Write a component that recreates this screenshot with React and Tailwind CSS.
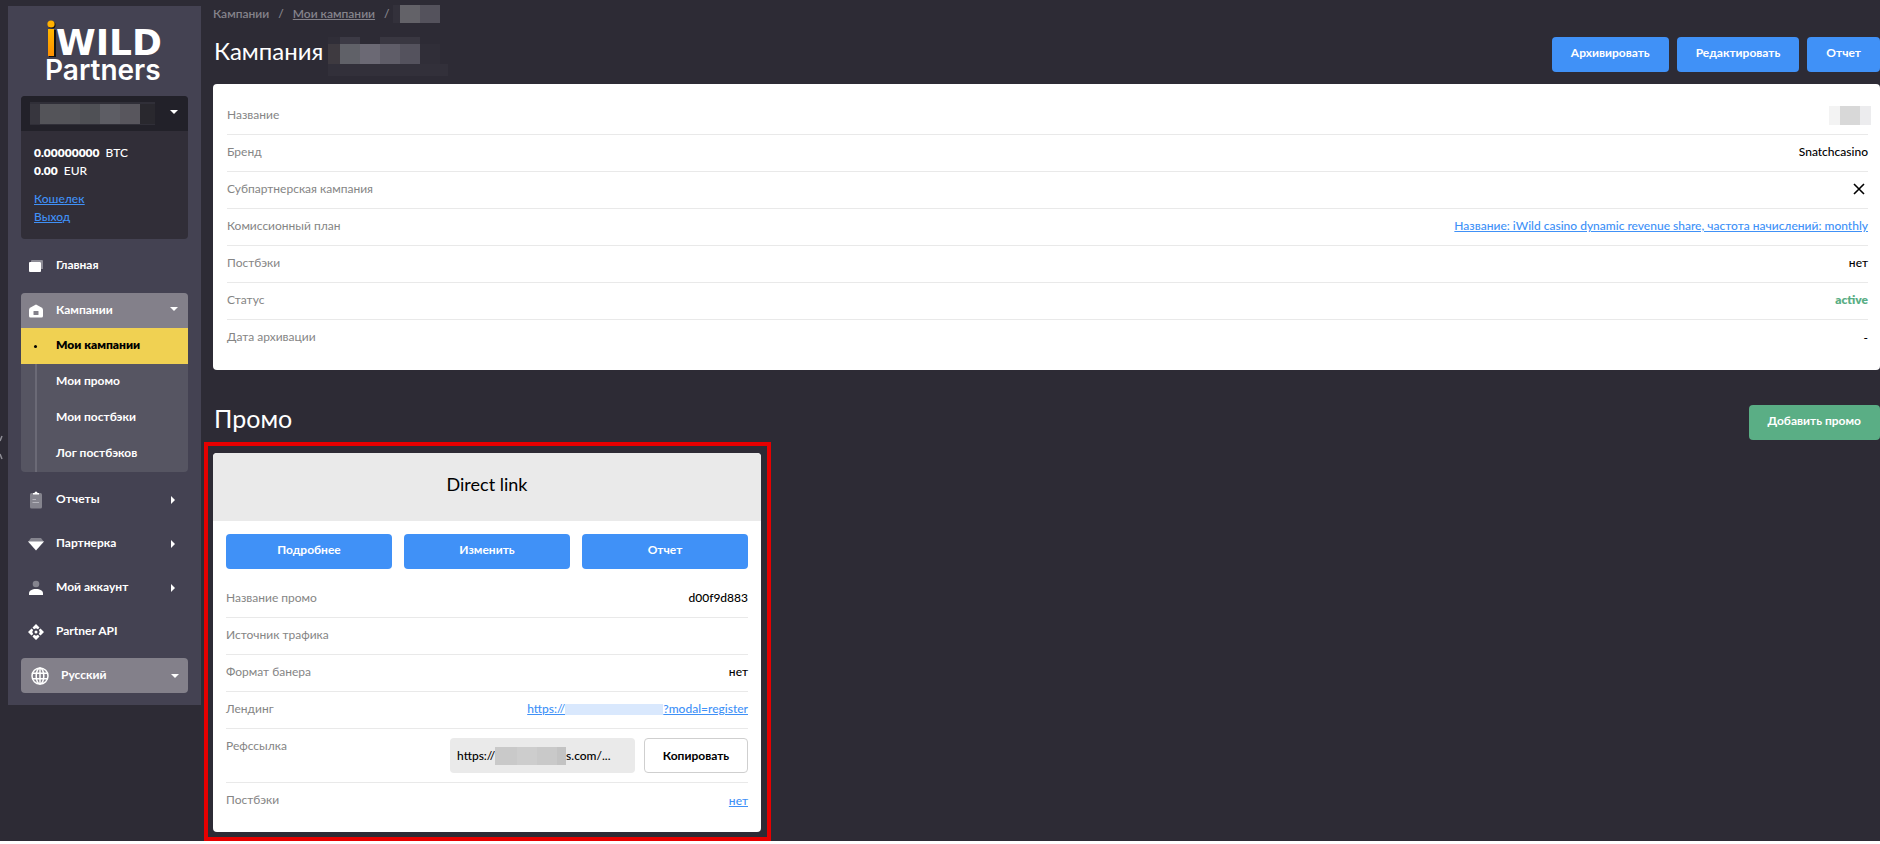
import React from "react";

const BLUE_BUTTON =
  "flex h-[35px] items-center justify-center rounded bg-[#4091f7] px-[19px] pb-1 text-xs font-bold text-white";

function CaretDown({ className = "" }) {
  return (
    <svg width="8" height="4" viewBox="0 0 8 4" className={className} aria-hidden="true">
      <path d="M0 0h8L4 4z" fill="#fff" />
    </svg>
  );
}

function CaretRight() {
  return (
    <svg width="4" height="8" viewBox="0 0 4 8" className="mr-px" aria-hidden="true">
      <path d="M0 0l4 4-4 4z" fill="#fff" />
    </svg>
  );
}

function HomeIcon() {
  return (
    <svg width="16" height="16" viewBox="0 0 16 16" aria-hidden="true">
      <path d="M4 2h10a1 1 0 0 1 1 1v8h-2V4H3V3a1 1 0 0 1 1-1z" fill="#8d8c96" />
      <rect x="1" y="4" width="12" height="10" rx="1" fill="#fff" />
    </svg>
  );
}

function CampaignIcon() {
  return (
    <svg width="16" height="16" viewBox="0 0 16 16" aria-hidden="true">
      <path d="M8 1.500 13.500 4.500Q15 5.400 15 7V13a1.500 1.500 0 0 1-1.500 1.500h-11A1.500 1.500 0 0 1 1 13V7Q1 5.400 2.500 4.500z" fill="#fff" />
      <rect x="5.500" y="8" width="5" height="4" rx="0.500" fill="#83808a" />
    </svg>
  );
}

function ReportIcon() {
  return (
    <svg width="16" height="18" viewBox="0 0 16 18" aria-hidden="true">
      <rect x="2" y="2" width="12" height="15.500" rx="1.500" fill="#85848e" />
      <path d="M5 3.500V2h1.500a1.500 1.500 0 0 1 3 0H11v1.500z" fill="#fff" />
      <path d="M4.500 8.500h3.500M4.500 11.500h6.500" stroke="#b4b3bb" strokeWidth="1" />
    </svg>
  );
}

function DiamondIcon() {
  return (
    <svg width="16" height="14" viewBox="0 0 16 14" aria-hidden="true">
      <path d="M3 1h10l3 4H0z" fill="#85848e" />
      <path d="M0 4.500h16L8 13.500z" fill="#fff" />
    </svg>
  );
}

function AccountIcon() {
  return (
    <svg width="16" height="16" viewBox="0 0 16 16" aria-hidden="true">
      <circle cx="8" cy="4" r="3.300" fill="#85848e" />
      <path d="M1 15v-1.500C1 10.500 4 9 8 9s7 1.500 7 4.500V15z" fill="#fff" />
    </svg>
  );
}

function ApiIcon() {
  return (
    <svg width="16" height="16" viewBox="0 0 16 16" aria-hidden="true">
      <g fill="#fff">
        <path d="M8 0l3.500 3.500-1.500 1.700L8 4.200 6 5.200 4.500 3.500z" />
        <path d="M8 16l3.500-3.500-1.500-1.700L8 11.800l-2-1-1.500 1.700z" />
        <path d="M0 8l3.500-3.500L5.200 6 4.200 8l1 2-1.700 1.500z" />
        <path d="M16 8l-3.500-3.500L10.800 6l1 2-1 2 1.700 1.500z" />
        <circle cx="8" cy="8" r="1.500" />
      </g>
    </svg>
  );
}

function GlobeIcon() {
  return (
    <svg width="18" height="18" viewBox="0 0 18 18" fill="none" stroke="#fff" strokeWidth="1.500" aria-hidden="true">
      <circle cx="9" cy="9" r="8" />
      <ellipse cx="9" cy="9" rx="3.800" ry="8" />
      <path d="M1.500 6.200h15M1.500 11.800h15M9 1v16" />
    </svg>
  );
}

function CrossIcon() {
  return (
    <svg width="12" height="12" viewBox="0 0 12 12" className="mr-[3px]" role="img" aria-label="нет">
      <path d="M1 1l10 10M11 1L1 11" stroke="#000" strokeWidth="1.600" />
    </svg>
  );
}

function Logo() {
  return (
    <svg width="120" height="70" viewBox="0 0 120 70" className="mx-auto" role="img" aria-label="iWILD Partners">
      <defs>
        <linearGradient id="flame" x1="0" y1="0" x2="0" y2="1">
          <stop offset="0" stopColor="#ffb800" />
          <stop offset="1" stopColor="#ff8f00" />
        </linearGradient>
      </defs>
      <text x="11" y="37" fill="#fff" className="font-['DejaVu_Sans',sans-serif] text-[36px] font-bold">
        WILD
      </text>
      <circle cx="7" cy="7" r="3.600" fill="#111" />
      <rect x="4" y="12" width="7" height="27" fill="#111" />
      <circle cx="6" cy="6" r="3.600" fill="#ffb000" />
      <rect x="3" y="11" width="6" height="27" fill="url(#flame)" />
      <text x="0" y="62" fill="#fff" className="font-['Inter',sans-serif] text-[28px] font-semibold">
        Partners
      </text>
    </svg>
  );
}

function NavLink({ icon, label, arrow }) {
  return (
    <a href="#" className="flex h-[35px] items-center pr-3 pl-[7px]">
      <span className="flex w-4 justify-center">{icon}</span>
      <span className="ml-3 flex-1 pb-px">{label}</span>
      {arrow && <CaretRight />}
    </a>
  );
}

function Sidebar() {
  return (
    <aside className="mt-1.5 ml-2 w-[193px] shrink-0 self-start bg-[#444252] px-[13px] py-3 text-xs font-bold text-white">
      <Logo />
      <section className="mt-2 overflow-hidden rounded bg-[#312e38]">
        <button type="button" aria-label="Аккаунт" className="flex h-[35px] w-full items-center justify-between bg-[#222129] pr-2.5 pl-[9px]">
          <span className="flex h-[23px] w-[125px] items-center bg-[#302f38]">
            <span className="h-5 w-2.5 bg-[#37363e]" />
            <span className="h-5 w-10 bg-[#545459]" />
            <span className="h-5 w-5 bg-[#4f5055]" />
            <span className="h-5 w-5 bg-[#5d5d64]" />
            <span className="h-5 w-5 bg-[#58565d]" />
            <span className="h-5 flex-1 bg-[#29282e]" />
          </span>
          <CaretDown className="mb-1" />
        </button>
        <div className="h-[108px] px-[13px] pt-[13px] leading-[18px]">
          <p className="font-medium"><b className="mr-1.5 font-extrabold">0.00000000</b>BTC</p>
          <p className="font-medium"><b className="mr-1.5 font-extrabold">0.00</b>EUR</p>
          <div className="mt-2.5 flex flex-col items-start font-medium text-[#4091f7] underline">
            <a href="#">Кошелек</a>
            <a href="#">Выход</a>
          </div>
        </div>
      </section>
      <nav className="mt-[9px] flex flex-col gap-2.5">
        <NavLink icon={<HomeIcon />} label="Главная" />
        <div className="overflow-hidden rounded bg-[#565562]">
          <button type="button" className="flex h-[35px] w-full items-center bg-[#83808a] pr-2.5 pl-[7px]">
            <CampaignIcon />
            <span className="ml-3 flex-1 pb-px text-left">Кампании</span>
            <CaretDown className="mb-1" />
          </button>
          <a href="#" className="flex h-9 items-center bg-[#f0d152] pl-[13px] font-extrabold text-black">
            <span className="size-[3px] rounded-full bg-black" />
            <span className="ml-[19px] pb-0.5">Мои кампании</span>
          </a>
          <div className="ml-3.5 border-l-2 border-[#6b6a76]">
            {["Мои промо", "Мои постбэки", "Лог постбэков"].map((item) => (
              <a key={item} href="#" className="flex h-9 items-center pb-0.5 pl-[19px]">{item}</a>
            ))}
          </div>
        </div>
        <div className="flex flex-col gap-[9px]">
          <NavLink icon={<ReportIcon />} label="Отчеты" arrow />
          <NavLink icon={<DiamondIcon />} label="Партнерка" arrow />
          <NavLink icon={<AccountIcon />} label="Мой аккаунт" arrow />
          <NavLink icon={<ApiIcon />} label="Partner API" />
          <button type="button" className="flex h-[35px] items-center rounded bg-[#83808a] pr-[9px] pl-2.5">
            <GlobeIcon />
            <span className="ml-3 flex-1 pb-px text-left">Русский</span>
            <CaretDown />
          </button>
        </div>
      </nav>
    </aside>
  );
}

function Row({ label, last, tall, children }) {
  return (
    <div className={`flex justify-between gap-4 ${tall ? "h-[54px]" : "h-[37px]"} ${last ? "" : "border-b border-[#e9e9e9]"}`}>
      <dt className="pt-2 text-[#858585]">{label}</dt>
      <dd className={tall ? "flex items-center font-medium" : "flex items-center pb-0.5 font-medium"}>{children}</dd>
    </div>
  );
}

function CampaignHeader() {
  return (
    <>
      <nav aria-label="Навигация" className="flex h-7 items-center text-xs font-semibold text-[#85838b]">
        <span>Кампании</span>
        <span className="mx-[9px]">/</span>
        <a href="#" className="underline">Мои кампании</a>
        <span className="mx-[9px]">/</span>
        <span className="-ml-1.5 flex h-[18px] w-[47px]">
          <span className="w-[7px] bg-[#33313b]" />
          <span className="w-5 bg-[#636268]" />
          <span className="w-5 bg-[#54525c]" />
        </span>
      </nav>
      <header className="flex h-14 items-start justify-between pt-[9px]">
        <div className="flex gap-[5px]">
          <h1 className="ml-px text-2xl leading-7 text-white">Кампания</h1>
          <div className="flex w-[120px] flex-col" aria-hidden="true">
            <div className="flex h-[7px]">
              <span className="w-3 bg-[#302e38]" />
              <span className="w-5 bg-[#3c3a45]" />
              <span className="w-5" />
              <span className="w-10 bg-[#393741]" />
            </div>
            <div className="flex h-5">
              <span className="w-3 bg-[#3e3a40]" />
              <span className="w-5 bg-[#606168]" />
              <span className="w-5 bg-[#6b6974]" />
              <span className="w-5 bg-[#5f5d68]" />
              <span className="w-5 bg-[#54525d]" />
              <span className="w-5 bg-[#302e38]" />
            </div>
            <div className="h-3 bg-[#32303a]" />
          </div>
        </div>
        <div className="flex gap-2">
          <button type="button" className={BLUE_BUTTON}>Архивировать</button>
          <button type="button" className={BLUE_BUTTON}>Редактировать</button>
          <button type="button" className={BLUE_BUTTON}>Отчет</button>
        </div>
      </header>
    </>
  );
}

function CampaignCard() {
  return (
    <dl className="rounded bg-white pt-3.5 pr-3 pb-[13px] pl-3.5">
      <Row label="Название">
        <span className="-mr-[3px] flex h-[19px] w-[42px]">
          <span className="w-[11px] bg-[#f3f3f3]" />
          <span className="w-5 bg-[#d8d8d8]" />
          <span className="w-[11px] bg-[#ececee]" />
        </span>
      </Row>
      <Row label="Бренд">Snatchcasino</Row>
      <Row label="Субпартнерская кампания"><CrossIcon /></Row>
      <Row label="Комиссионный план">
        <a href="#" className="text-[#4091f7] underline">
          Название: iWild casino dynamic revenue share, частота начислений: monthly
        </a>
      </Row>
      <Row label="Постбэки">нет</Row>
      <Row label="Статус"><span className="font-extrabold text-[#5aae85]">active</span></Row>
      <Row label="Дата архивации" last>-</Row>
    </dl>
  );
}

function PromoCard() {
  return (
    <article className="overflow-hidden rounded bg-white">
      <h3 className="flex h-[68px] items-center justify-center bg-[#eaeaea] pb-1.5 text-lg">Direct link</h3>
      <div className="px-[13px] pt-[13px] pb-3">
        <div className="grid grid-cols-3 gap-3">
          <button type="button" className={BLUE_BUTTON}>Подробнее</button>
          <button type="button" className={BLUE_BUTTON}>Изменить</button>
          <button type="button" className={BLUE_BUTTON}>Отчет</button>
        </div>
        <dl className="mt-3">
          <Row label="Название промо">d00f9d883</Row>
          <Row label="Источник трафика" />
          <Row label="Формат банера">нет</Row>
          <Row label="Лендинг">
            <a href="#" className="flex items-center text-[#4091f7] underline">
              https://
              <span className="h-[11px] w-[98px] bg-[#d9e8fd]" />
              ?modal=register
            </a>
          </Row>
          <Row label="Рефссылка" tall>
            <div className="flex gap-[9px]">
              <div className="flex h-[35px] w-[185px] items-center rounded bg-[#eaeaea] pl-[7px]">
                https://
                <span className="flex h-[18px]">
                  <span className="w-[22px] bg-[#c9c9c9]" />
                  <span className="w-5 bg-[#cdcdcd]" />
                  <span className="w-5 bg-[#c9c9c9]" />
                  <span className="w-[9px] bg-[#c3c3c3]" />
                </span>
                s.com/...
              </div>
              <button type="button" className="h-[35px] w-[104px] rounded border border-[#cfcfcf] bg-white text-xs font-bold">
                Копировать
              </button>
            </div>
          </Row>
          <Row label="Постбэки" last><a href="#" className="text-[#4091f7] underline">нет</a></Row>
        </dl>
      </div>
    </article>
  );
}

export default function App() {
  return (
    <div className="relative flex overflow-hidden bg-[#2d2b35] font-['Lato',sans-serif] text-xs leading-[18px] text-black">
      <svg width="3" height="26" viewBox="0 0 3 26" className="absolute top-[435px] left-0" aria-hidden="true">
        <path d="M0 6L2 1M0 19l2 5" stroke="#8f8e96" strokeWidth="1.500" />
      </svg>
      <Sidebar />
      <main className="min-w-0 flex-1 pl-3">
        <CampaignHeader />
        <CampaignCard />
        <div className="flex h-[72px] items-end justify-between pb-0.5">
          <h2 className="ml-px pb-1.5 text-[25px] leading-[32px] text-white">Промо</h2>
          <button type="button" className="h-[35px] rounded bg-[#5aae85] px-[19px] pb-1 text-xs font-bold text-white">
            Добавить промо
          </button>
        </div>
        <section className="-ml-[9px] w-[567px] border-4 border-[#e60000] pt-[7px] pr-1.5 pb-[5px] pl-[5px]">
          <PromoCard />
        </section>
      </main>
    </div>
  );
}
